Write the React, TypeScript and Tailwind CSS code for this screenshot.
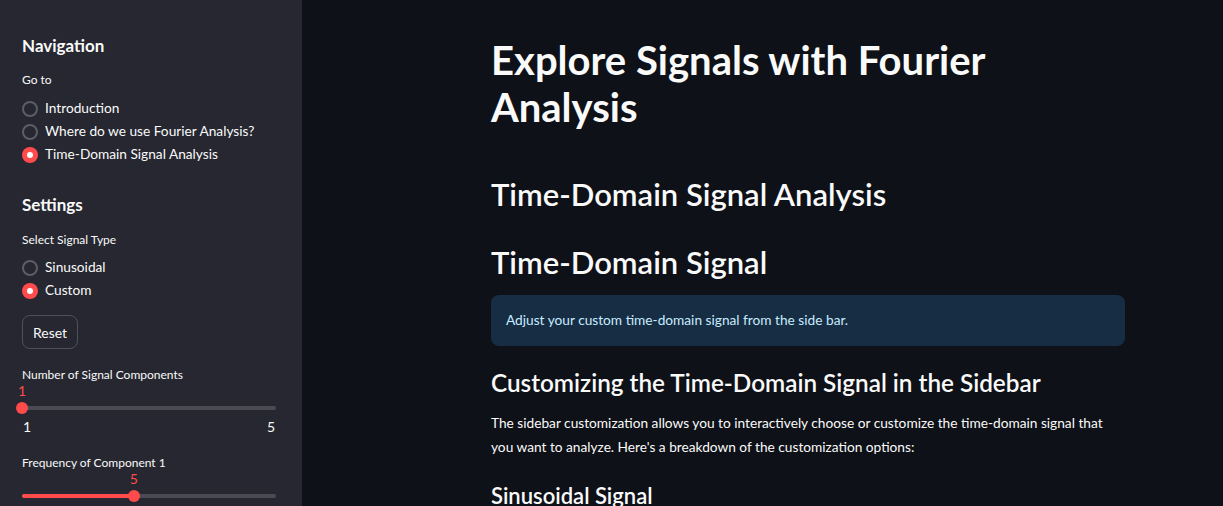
const navItems = ["Introduction", "Where do we use Fourier Analysis?", "Time-Domain Signal Analysis"];
const signalTypes = ["Sinusoidal", "Custom"];

function Radio({ label, checked }: { label: string; checked: boolean }) {
  return (
    <div className="flex h-[23px] items-center gap-[7px]">
      {checked ? (
        <span className="flex size-[16px] items-center justify-center rounded-full bg-[#ff4b4b]">
          <span className="size-[6px] rounded-full bg-white" />
        </span>
      ) : (
        <span className="size-[16px] rounded-full border-2 border-[#5c5d66]" />
      )}
      <span className="text-[13.7px] text-[#fafafa]">{label}</span>
    </div>
  );
}

function Slider({ label, value, pct, showRange }: { label: string; value: number; pct: number; showRange?: boolean }) {
  return (
    <div>
      <div className="h-[20px] text-[12px] leading-[20px] text-[#fafafa]">{label}</div>
      <div className="relative h-[32px]">
        <div className="absolute top-[21px] h-[4px] w-full rounded-full bg-[#4a4b53]" />
        <div className="absolute top-[21px] h-[4px] rounded-full bg-[#ff4b4b]" style={{ width: `${pct}%` }} />
        <div
          className="absolute top-[17px] size-[12px] -translate-x-1/2 rounded-full bg-[#ff4b4b]"
          style={{ left: `${pct}%` }}
        />
        <div
          className="absolute top-[-2px] -translate-x-1/2 text-[14px] leading-[16px] text-[#ff4b4b]"
          style={{ left: `${pct}%` }}
        >
          {value}
        </div>
      </div>
      {showRange && (
        <div className="flex h-[20px] justify-between px-[1px] text-[14px] leading-[20px] text-[#fafafa]">
          <span>1</span>
          <span>5</span>
        </div>
      )}
    </div>
  );
}

export default function App() {
  return (
    <div className="flex h-[506px] w-[1223px] overflow-hidden font-['Lato','Noto_Sans',sans-serif] text-[#fafafa]">
      <aside className="w-[302px] shrink-0 bg-[#262730] px-[22px] pt-[34px]">
        <h2 className="text-[17px] leading-[24px] font-bold">Navigation</h2>
        <div className="mt-[12px] text-[12px] leading-[20px]">Go to</div>
        <div className="mt-[7px]">
          {navItems.map((n) => (
            <Radio key={n} label={n} checked={n === "Time-Domain Signal Analysis"} />
          ))}
        </div>
        <h2 className="mt-[27px] text-[17px] leading-[24px] font-bold">Settings</h2>
        <div className="mt-[13px] text-[12px] leading-[20px]">Select Signal Type</div>
        <div className="mt-[6px]">
          {signalTypes.map((n) => (
            <Radio key={n} label={n} checked={n === "Custom"} />
          ))}
        </div>
        <button className="mt-[13px] h-[34px] w-[56px] rounded-[8px] border border-[#4f5058] text-[14px] text-[#fafafa]">
          Reset
        </button>
        <div className="mt-[16px] w-[254px]">
          <Slider label="Number of Signal Components" value={1} pct={0} showRange />
        </div>
        <div className="mt-[16px] w-[254px]">
          <Slider label="Frequency of Component 1" value={5} pct={44} />
        </div>
      </aside>
      <main className="flex-1 bg-[#0e1117]">
        <div className="ml-[189px] w-[634px] pt-[37px]">
          <h1 className="text-[40px] leading-[47px] font-bold">Explore Signals with Fourier Analysis</h1>
          <h2 className="mt-[43px] text-[31px] leading-[40px] font-semibold">Time-Domain Signal Analysis</h2>
          <h2 className="mt-[28px] text-[31px] leading-[40px] font-semibold">Time-Domain Signal</h2>
          <div className="mt-[13px] flex h-[51px] items-center rounded-[8px] bg-[#172d43] px-[15px] text-[13.7px] text-[#c7ebff]">
            Adjust your custom time-domain signal from the side bar.
          </div>
          <h3 className="mt-[21px] text-[24.3px] leading-[32px] font-semibold">
            Customizing the Time-Domain Signal in the Sidebar
          </h3>
          <p className="mt-[12px] text-[13.7px] leading-[24px]">
            The sidebar customization allows you to interactively choose or customize the time-domain signal that you
            want to analyze. Here's a breakdown of the customization options:
          </p>
          <h4 className="mt-[23px] text-[22px] leading-[28px] font-semibold">Sinusoidal Signal</h4>
        </div>
      </main>
    </div>
  );
}
